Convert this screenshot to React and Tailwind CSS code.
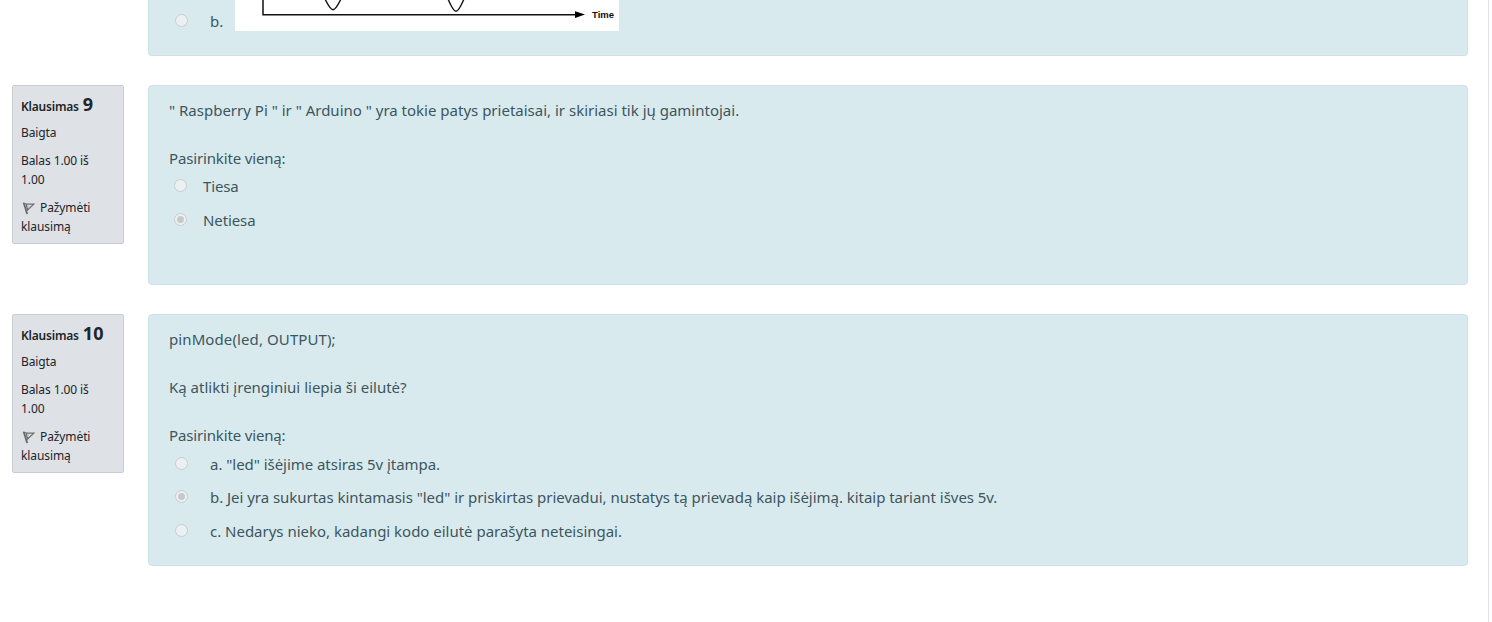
function Flag() {
  return (
    <svg className="mr-[4px] ml-[1px] inline-block h-[13px] w-[14px] align-[-3px]" viewBox="0 0 14 13" fill="none" stroke="#6c6c6c">
      <path d="M1.800 1L5.200 12" strokeWidth="1.900" />
      <path d="M1 1.100L4.500 2L11.800 2.100L5.500 8L4.300 2.500" strokeWidth="1.200" />
      <path d="M6 3.400L6.400 5.600" strokeWidth="0.7" stroke="#a5a7a9" />
    </svg>
  );
}

function Radio({ checked, className = "-mt-[2px]" }) {
  return (
    <span className={"flex size-[13px] shrink-0 items-center justify-center rounded-full border border-[#c9cdce] bg-[#ebf0f3] " + className}>
      {checked && <span className="size-[7px] rounded-full bg-[#c6cacb]" />}
    </span>
  );
}

function Info({ number }) {
  return (
    <aside className="h-[159px] w-28 shrink-0 rounded-[2px] border border-[#caccd3] bg-[#dee2e6] px-2 pt-[6px] text-[12px] leading-[19px] text-[#212529]">
      <h3 className="flex h-6 items-baseline gap-1 whitespace-nowrap leading-6">
        <span className="text-[12px] font-semibold tracking-[-0.2px]">Klausimas</span>
        <span className="text-[18px] font-bold tracking-[0.2px]">{number}</span>
      </h3>
      <div className="mt-[7px] tracking-[-0.1px]">Baigta</div>
      <div className="mt-[9px] tracking-[-0.1px]">Balas 1.00 iš<br />1.00</div>
      <div className="mt-[9px] whitespace-nowrap tracking-[-0.1px]"><Flag />Pažymėti<br />klausimą</div>
    </aside>
  );
}

function Answer({ checked, children, className }) {
  return (
    <div className={"flex h-6 items-center whitespace-nowrap " + className}>
      <Radio checked={checked} />
      {children}
    </div>
  );
}

const panel = "w-[1320px] shrink-0 border border-[#cbe3e8] bg-[#d9eaee] px-5 text-[15px] leading-6 text-[#3c565e]";

export default function App() {
  return (
    <div className="flex h-[622px] w-[1492px] overflow-hidden bg-white font-['Noto_Sans',sans-serif]">
      <main className="flex w-[1489px] shrink-0 flex-col gap-[29px] border-r border-[#dee2e6] pl-3">
        <section className="flex h-14 pl-[136px]">
          <div className={panel + " flex rounded-b border-t-0"}>
            <div className="flex h-[41px] w-[66px] shrink-0 items-center pl-[6px]">
              <Radio className="mt-0" />
              <span className="ml-[22px]">b.</span>
            </div>
            <svg className="h-[31px] w-[384px] bg-white" viewBox="0 0 384 31" fill="none" stroke="#111">
              <path d="M28 0V14.8H342" strokeWidth="1.5" />
              <path d="M90 -1C93 5 95.500 9.800 98 9.800S103 5 106 -1M213 -1C216 6 218.500 11.300 221 11.300S226 6 229 -1" strokeWidth="1.4" />
              <path d="M340 11.200L350 14.600L340 18Z" fill="#000" stroke="none" />
              <text x="357" y="17.500" fill="#111" stroke="none" fontSize="9.500" fontWeight="700" fontFamily="Liberation Sans, sans-serif">Time</text>
            </svg>
          </div>
        </section>

        <section className="flex h-[200px] gap-6">
          <Info number="9" />
          <div className={panel + " rounded pt-[12px]"}>
            <p className="whitespace-nowrap">" Raspberry Pi " ir " Arduino " yra tokie patys prietaisai, ir skiriasi tik jų gamintojai.</p>
            <p className="mt-6 tracking-[-0.15px]">Pasirinkite vieną:</p>
            <Answer className="mt-[4px] gap-4 pl-[5px]"><span className="tracking-[-0.15px]">Tiesa</span></Answer>
            <Answer checked className="mt-[10px] gap-4 pl-[5px]"><span className="tracking-[-0.1px]">Netiesa</span></Answer>
          </div>
        </section>

        <section className="flex h-[252px] gap-6">
          <Info number="10" />
          <div className={panel + " rounded pt-[12px]"}>
            <p className="tracking-[0.1px]">pinMode(led, OUTPUT);</p>
            <p className="mt-6">Ką atlikti įrenginiui liepia ši eilutė?</p>
            <p className="mt-6 tracking-[-0.15px]">Pasirinkite vieną:</p>
            <Answer className="mt-[5px] gap-[22px] pl-[6px]"><span className="tracking-[-0.04px]">a. "led" išėjime atsiras 5v įtampa.</span></Answer>
            <Answer checked className="mt-[9px] gap-[22px] pl-[6px]"><span className="tracking-[-0.035px]">b. Jei yra sukurtas kintamasis "led" ir priskirtas prievadui, nustatys tą prievadą kaip išėjimą. kitaip tariant išves 5v.</span></Answer>
            <Answer className="mt-[10px] gap-[22px] pl-[6px]"><span className="tracking-[-0.015px]">c. Nedarys nieko, kadangi kodo eilutė parašyta neteisingai.</span></Answer>
          </div>
        </section>
      </main>
    </div>
  );
}
